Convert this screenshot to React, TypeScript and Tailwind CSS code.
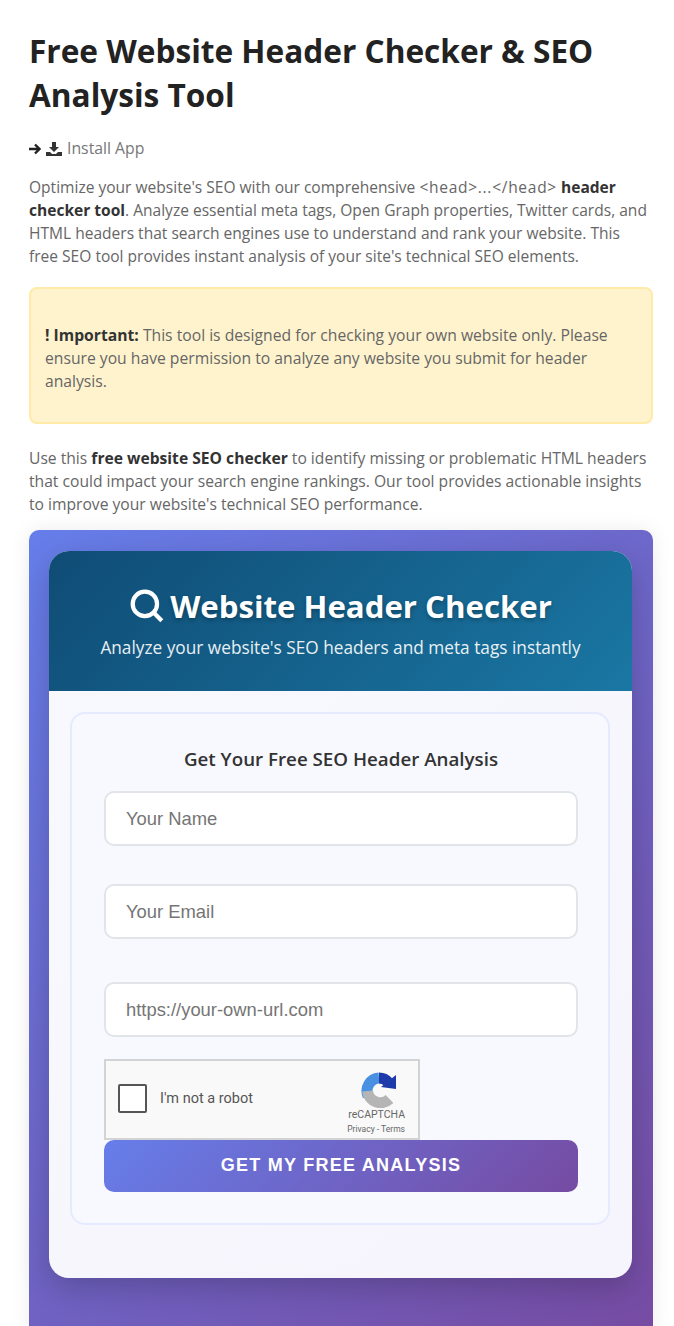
const sans = "font-['Open_Sans',sans-serif]";

function Field({ placeholder, className }: { placeholder: string; className: string }) {
	return (
		<input
			type="text"
			placeholder={placeholder}
			className={`block w-full h-[55px] px-[20px] bg-white border-2 border-[#e1e5e9] rounded-[10px] text-[18.400px] font-['Liberation_Sans',sans-serif] placeholder:text-[#757575] ${className}`}
		/>
	);
}

function Recaptcha() {
	return (
		<div className="relative w-[316px] h-[81px] bg-[#f9f9f9] border-2 border-[#d3d3d3] font-['Roboto',sans-serif]">
			<div className="absolute left-[12px] top-[23px] w-[29px] h-[29px] bg-white border-2 border-[#555] rounded-[2px]" />
			<span className="absolute left-[54px] top-[29px] text-[14.500px] leading-[17px] text-[#555]">I'm not a robot</span>
			<svg className="absolute left-[254px] top-[11px] w-[38px] h-[36px]" viewBox="0 0 36 36" fill="none" strokeWidth="11">
				<path d="M7 24A13 13 0 0 1 18 6" stroke="#4a90e2" />
				<path d="M18 6c4 0 7 1.500 9 4" stroke="#1c3aa9" />
				<path d="M20 15 35 3v14z" fill="#1c3aa9" />
				<path d="M6.500 19a13 13 0 0 0 22 8" stroke="#b5b5b5" />
			</svg>
			<span className="absolute right-[13px] top-[47px] text-[10.500px] leading-[13px] text-[#666]">reCAPTCHA</span>
			<span className="absolute right-[13px] top-[63px] text-[8.500px] leading-[10px] text-[#666]">Privacy - Terms</span>
		</div>
	);
}

export default function App() {
	return (
		<div className={`h-[1326px] overflow-hidden bg-white pl-[29px] pr-[21px] pt-[29px] ${sans}`}>
			<h1 className="text-[31.600px] leading-[44px] font-bold text-[#222]">Free Website Header Checker &amp; SEO Analysis Tool</h1>

			<div className="mt-[20px] flex items-center h-[24px] text-[15.800px] text-[#777]">
				<svg className="w-[12px] h-[12px] text-[#222]" viewBox="0 0 12 12" fill="none" stroke="currentColor" strokeWidth="2.400">
					<path d="M0 6h10M6 1.500 10.500 6 6 10.500" />
				</svg>
				<svg className="ml-[5px] w-[16px] h-[14px] text-[#333]" viewBox="0 0 16 14" fill="currentColor">
					<path d="M6 0h4v5h3l-5 5-5-5h3zM0 10h4l2 2h4l2-2h4v4H0z" />
				</svg>
				<span className="ml-[5px]">Install App</span>
			</div>

			<p className="mt-[15px] text-[15.550px] leading-[23px] text-[#666]">
				Optimize your website's SEO with our comprehensive <span className="tracking-[0.700px]">&lt;head&gt;...&lt;/head&gt;</span> <strong className="text-[#333]">header checker tool</strong>. Analyze essential meta tags, Open Graph properties, Twitter cards, and HTML headers that search engines use to understand and rank your website. This<br />free SEO tool provides instant analysis of your site's technical SEO elements.
			</p>

			<div className="mt-[19px] h-[137px] flex items-center pl-[14px] pr-[15px] pt-[6px] bg-[#fff3cd] border-2 border-[#ffeaa7] rounded-[8px] text-[15.700px] leading-[23px] text-[#666]">
				<p><strong className="text-[#333]">! Important:</strong> This tool is designed for checking your own website only. Please ensure you have permission to analyze any website you submit for header analysis.</p>
			</div>

			<p className="mt-[23px] text-[15.650px] leading-[23px] text-[#666]">
				Use this <strong className="text-[#333]">free website SEO checker</strong> to identify missing or problematic HTML headers that could impact your search engine rankings. Our tool provides actionable insights to improve your website's technical SEO performance.
			</p>

			<div className="mt-[14px] pl-[20px] pr-[21px] pt-[21px] pb-[60px] rounded-[10px] bg-[linear-gradient(135deg,#667eea_0%,#764ba2_100%)] shadow-[0_0_20px_rgba(0,0,0,0.08)]">
				<div className="overflow-hidden rounded-[20px] bg-[linear-gradient(135deg,#f8f9ff_0%,#f6f4fc_100%)] shadow-[0_10px_30px_rgba(0,0,0,0.2)] pb-[53px]">
					<div className="h-[140px] flex flex-col items-center bg-[linear-gradient(135deg,#0f4c75_0%,#1a77a3_100%)] text-white">
						<div className="mt-[32px] flex items-center h-[46px]">
							<svg className="w-[36px] h-[36px] mr-[5px]" viewBox="0 0 34 34" fill="none" stroke="white" strokeWidth="4">
								<circle cx="15" cy="15" r="11.500" />
								<path d="M23 23l8 8" />
							</svg>
							<span className="text-[31.200px] font-bold [text-shadow:0_2px_4px_rgba(0,0,0,0.3)]">Website Header Checker</span>
						</div>
						<p className="mt-[6px] text-[17.250px] leading-[26px] opacity-90">Analyze your website's SEO headers and meta tags instantly</p>
					</div>

					<div className="ml-[21px] mr-[22px] mt-[21px] h-[513px] pl-[32px] pr-[30px] bg-[#f8f9ff] border-2 border-[#e6eaff] rounded-[15px]">
						<h3 className="mt-[32px] text-center text-[18.750px] leading-[26px] font-semibold text-[#333]">Get Your Free SEO Header Analysis</h3>
						<Field placeholder="Your Name" className="mt-[19px]" />
						<Field placeholder="Your Email" className="mt-[38px]" />
						<Field placeholder="https://your-own-url.com" className="mt-[43px]" />
						<div className="mt-[22px]"><Recaptcha /></div>
						<button className="block w-full h-[52px] pb-[2px] rounded-[10px] bg-[linear-gradient(135deg,#667eea_0%,#764ba2_100%)] text-white font-['Liberation_Sans',sans-serif] font-bold text-[18px] tracking-[1.250px]">GET MY FREE ANALYSIS</button>
					</div>
				</div>
			</div>
		</div>
	);
}
